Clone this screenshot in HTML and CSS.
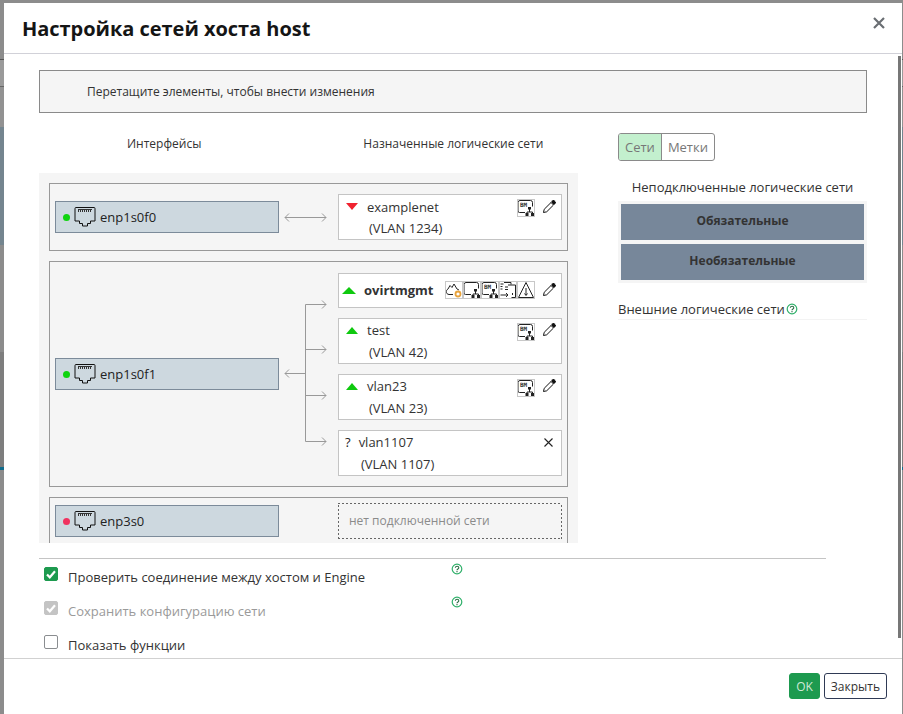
FILE: index.html
```html
<!DOCTYPE html>
<html lang="ru">
<head>
<meta charset="UTF-8">
<meta name="viewport" content="width=device-width, initial-scale=1.0">
<title>Настройка сетей хоста host</title>
<link rel="stylesheet" href="styles.css">
</head>
<body>
<svg class="defs" width="0" height="0">
    <symbol id="i-port" viewBox="0 0 22 20">
        <path d="M2 .5h18a1 1 0 0 1 1 1v12.500h-4.500v2.500h-3v2.500h-5v-2.500h-3v-2.500h-4.500v-12.500a1 1 0 0 1 1-1z" fill="none" stroke="#111"/>
        <path d="M4 2.500h14M4.500 3v2M6.500 3v2M8.500 3v2M10.500 3v2M12.500 3v2M14.500 3v2M16.500 3v2" fill="none" stroke="#333"/>
    </symbol>
    <symbol id="i-pencil" viewBox="0 0 14 14">
        <path d="M1.500 12.500l.7-3.200 6.800-6.800 2.500 2.500-6.800 6.800z" fill="#fff" stroke="#111"/>
        <path d="M9 2l1.700-1.700a1 1 0 0 1 1.400 0l1.600 1.600a1 1 0 0 1 0 1.400l-1.700 1.700z" fill="#111"/>
    </symbol>
    <symbol id="i-help" viewBox="0 0 12 12">
        <circle cx="6" cy="6" r="4.800" fill="#fff" stroke="#2fb06a" stroke-width="1.200"/>
        <path d="M4.300 4.700c.2-2 3.500-2 3.500 0 0 1.300-1.800 1.200-1.800 2.500" fill="none" stroke="#2c6e46" stroke-width="1.100"/>
        <path d="M6 8v1.200" stroke="#2c6e46" stroke-width="1.100"/>
    </symbol>
    <symbol id="i-x" viewBox="0 0 12 12">
        <path d="M1 1l10 10M11 1l-10 10" fill="none" stroke="currentColor" stroke-width="2.200"/>
    </symbol>
    <symbol id="i-x-thin" viewBox="0 0 9 9">
        <path d="M.5 .5l8 8M8.500 .5l-8 8" fill="none" stroke="currentColor" stroke-width="1.100"/>
    </symbol>
    <symbol id="i-tick" viewBox="0 0 12 12">
        <path d="M2 6.500l2.800 2.800 5.200-6" fill="none" stroke="#fff" stroke-width="2.200"/>
    </symbol>
    <symbol id="i-tree" viewBox="0 0 18 18">
        <path d="M5 13.500h-2.500a1.500 1.500 0 0 1-1.500-1.500v-8.500a2 2 0 0 1 2-2h10.500a2 2 0 0 1 2 2v4" fill="none" stroke="#222"/>
        <path d="M5 13.500h3M12.500 10v3M10 14v-1h5.500v1" fill="none" stroke="#222"/>
        <path d="M11 8h3v2.500h-3zM8.500 14h3v3h-3zM14 14h3v3h-3z" fill="#222"/>
    </symbol>
    <symbol id="i-mgmt" viewBox="0 0 18 18">
        <path d="M4 13.500c-3.500-.5-3.500-4-1-5.500l2-3.500 2 2 2-3.500 3 5 2 1" fill="none" stroke="#222"/>
        <path d="M4 13.500h4" stroke="#222"/>
        <circle cx="13" cy="13" r="2.500" fill="none" stroke="#e8a33d" stroke-width="1.800"/>
    </symbol>
    <symbol id="i-migrate" viewBox="0 0 18 18">
        <path d="M5 1.500h7v2M9 4h7.500v12.500h-4" fill="none" stroke="#222"/>
        <path d="M1.500 3h3M1.500 5.500h2M1.500 8h2M6 6h3M6 8.500h3M1.500 14h7M7 12l2 2-2 2M13.500 14v-2" fill="none" stroke="#222"/>
    </symbol>
    <symbol id="i-warn" viewBox="0 0 18 18">
        <path d="M9 1.500l7.500 15h-15z" fill="none" stroke="#222"/>
        <path d="M9 7v7M7.500 12.500l1.500 2 1.500-2" fill="none" stroke="#222"/>
    </symbol>
</svg>

<div class="modal">
    <div class="modal-header">
        <h1>Настройка сетей хоста host</h1>
        <svg class="close-x"><use href="#i-x"/></svg>
    </div>

    <div class="modal-body">
        <div class="scrollbar"></div>
        <div class="hint">Перетащите элементы, чтобы внести изменения</div>

        <div class="columns">
            <div class="left-col">
                <div class="col-titles">
                    <span class="title-ifaces">Интерфейсы</span>
                    <span class="title-nets">Назначенные логические сети</span>
                </div>
                <div class="panel">
                    <div class="group group-one">
                        <div class="iface">
                            <span class="dot up"></span>
                            <svg class="port"><use href="#i-port"/></svg>
                            enp1s0f0
                        </div>
                        <svg class="wire" width="59" height="12" viewBox="0 0 59 12">
                            <path d="M6 6.500h41M10 2.500l-4 4 4 4M43 2.500l4 4-4 4" fill="none" stroke="#999"/>
                        </svg>
                        <div class="nets">
                            <div class="net">
                                <div class="net-top">
                                    <span class="tri down"></span>
                                    <span class="net-name">examplenet</span>
                                    <span class="net-icons">
                                        <svg class="cap" viewBox="0 0 18 18"><use href="#i-tree"/><text class="icon-text" x="3" y="7.500">BM</text></svg>
                                    </span>
                                    <svg class="pencil"><use href="#i-pencil"/></svg>
                                </div>
                                <div class="vlan">(VLAN 1234)</div>
                            </div>
                        </div>
                    </div>

                    <div class="group">
                        <div class="iface">
                            <span class="dot up"></span>
                            <svg class="port"><use href="#i-port"/></svg>
                            enp1s0f1
                        </div>
                        <svg class="wire" width="59" height="204" viewBox="0 0 59 204">
                            <path d="M6 101.500h20.500M10 97.500l-4 4 4 4" fill="none" stroke="#999"/>
                            <path d="M26.500 32.500v137M26.500 32.500h20.500M26.500 77.500h20.500M26.500 123.500h20.500M26.500 169.500h20.500" fill="none" stroke="#999"/>
                            <path d="M43 28.500l4 4-4 4M43 73.500l4 4-4 4M43 119.500l4 4-4 4M43 165.500l4 4-4 4" fill="none" stroke="#999"/>
                        </svg>
                        <div class="nets">
                            <div class="net net-main">
                                <div class="net-top">
                                    <span class="tri up"></span>
                                    <span class="net-name bold">ovirtmgmt</span>
                                    <span class="net-icons">
                                        <svg class="cap" viewBox="0 0 18 18"><use href="#i-mgmt"/></svg>
                                        <svg class="cap" viewBox="0 0 18 18"><use href="#i-tree"/></svg>
                                        <svg class="cap" viewBox="0 0 18 18"><use href="#i-tree"/><text class="icon-text" x="3" y="7.500">BM</text></svg>
                                        <svg class="cap" viewBox="0 0 18 18"><use href="#i-migrate"/></svg>
                                        <svg class="cap" viewBox="0 0 18 18"><use href="#i-warn"/></svg>
                                    </span>
                                    <svg class="pencil"><use href="#i-pencil"/></svg>
                                </div>
                            </div>
                            <div class="net">
                                <div class="net-top">
                                    <span class="tri up"></span>
                                    <span class="net-name">test</span>
                                    <span class="net-icons">
                                        <svg class="cap" viewBox="0 0 18 18"><use href="#i-tree"/><text class="icon-text" x="3" y="7.500">BM</text></svg>
                                    </span>
                                    <svg class="pencil"><use href="#i-pencil"/></svg>
                                </div>
                                <div class="vlan">(VLAN 42)</div>
                            </div>
                            <div class="net">
                                <div class="net-top">
                                    <span class="tri up"></span>
                                    <span class="net-name">vlan23</span>
                                    <span class="net-icons">
                                        <svg class="cap" viewBox="0 0 18 18"><use href="#i-tree"/><text class="icon-text" x="3" y="7.500">BM</text></svg>
                                    </span>
                                    <svg class="pencil"><use href="#i-pencil"/></svg>
                                </div>
                                <div class="vlan">(VLAN 23)</div>
                            </div>
                            <div class="net net-unknown">
                                <div class="net-top">
                                    <span class="question">?</span>
                                    <span class="net-name">vlan1107</span>
                                    <span class="net-icons"></span>
                                    <svg class="remove"><use href="#i-x-thin"/></svg>
                                </div>
                                <div class="vlan">(VLAN 1107)</div>
                            </div>
                        </div>
                    </div>

                    <div class="group group-last">
                        <div class="iface">
                            <span class="dot down"></span>
                            <svg class="port"><use href="#i-port"/></svg>
                            enp3s0
                        </div>
                        <div class="no-net">нет подключенной сети</div>
                    </div>
                </div>
            </div>

            <div class="right-col">
                <div class="toggle">
                    <span class="toggle-item on">Сети</span>
                    <span class="toggle-item">Метки</span>
                </div>
                <div class="free-title">Неподключенные логические сети</div>
                <div class="free-panel">
                    <div class="free-box">Обязательные</div>
                    <div class="free-box">Необязательные</div>
                </div>
                <div class="external">Внешние логические сети<svg class="help"><use href="#i-help"/></svg></div>
            </div>
        </div>

        <div class="checks">
            <div class="check-row">
                <span class="box checked"><svg class="tick"><use href="#i-tick"/></svg></span>
                <span class="check-label">Проверить соединение между хостом и Engine</span>
                <svg class="help check-help"><use href="#i-help"/></svg>
            </div>
            <div class="check-row disabled">
                <span class="box checked"><svg class="tick"><use href="#i-tick"/></svg></span>
                <span class="check-label">Сохранить конфигурацию сети</span>
                <svg class="help check-help"><use href="#i-help"/></svg>
            </div>
            <div class="check-row">
                <span class="box"></span>
                <span class="check-label">Показать функции</span>
            </div>
        </div>
    </div>

    <div class="modal-footer">
        <button class="btn btn-ok">OK</button>
        <button class="btn">Закрыть</button>
    </div>
</div>
</body>
</html>
```

FILE: styles.css
```css
* {
    box-sizing: border-box;
}

html, body {
    height: 100%;
}

/* the dimmed page behind the dialog only shows as thin strips at the edges */
body {
    margin: 0;
    padding: 3px 1px 0 4px;
    overflow: hidden;
    font-family: "Open Sans", sans-serif;
    font-size: 13px;
    color: #333;
    background-color: #8a8a8a;
    background-image: linear-gradient(180deg,
        #8c8c8c 0 59px, #555 59px 60px,
        #9a9a9a 60px 86px, #666 86px 87px,
        #929292 87px 127px,
        #74858f 127px 245px,
        #8c8c8c 245px 352px,
        #7e7e7e 352px 467px, #0f6b8c 467px 470px,
        #8c8c8c 470px);
}

.defs {
    display: block;
    height: 0;
}

.icon-text {
    font-family: "DejaVu Sans Mono", monospace;
    font-size: 6px;
    font-weight: bold;
    fill: #333;
}

.modal {
    height: 711px;
    display: flex;
    flex-direction: column;
    background-color: #fff;
}

.modal-header {
    height: 51px;
    flex: none;
    display: flex;
    justify-content: space-between;
    padding: 11px 17px 0 18px;
    border-bottom: 1px solid #d1d1d8;
}

.modal-header h1 {
    margin: 0;
    font-size: 20px;
    line-height: 30px;
    font-weight: 700;
    letter-spacing: -0.03px;
    color: #151515;
}

.close-x {
    width: 12px;
    height: 12px;
    margin-top: 3px;
    color: #6a6e73;
}

.modal-body {
    position: relative;
    height: 604px;
    flex: none;
    padding: 16px 35px 0 35px;
    overflow: hidden;
}

.scrollbar {
    position: absolute;
    top: 2px;
    right: 1px;
    width: 3px;
    height: 582px;
    background-color: #777;
}

.hint {
    height: 43px;
    padding-left: 47px;
    font-size: 12px;
    line-height: 41px;
    background-color: #f5f5f5;
    border: 1px solid #8a8a8a;
}

.columns {
    display: flex;
    gap: 40px;
    height: 445px;
}

.left-col {
    width: 539px;
    flex: none;
}

.col-titles {
    height: 60px;
    display: flex;
    padding-top: 22px;
    font-size: 12px;
    line-height: 18px;
}

.title-ifaces {
    margin-left: 88px;
}

.title-nets {
    margin-left: 162px;
}

.panel {
    height: 370px;
    overflow: hidden;
    padding: 10px 10px 0;
    background-color: #f5f5f5;
}

.group {
    display: flex;
    align-items: center;
    padding: 0 5px;
    height: 226px;
    margin-bottom: 10px;
    border: 1px solid #999;
}

.group-one {
    height: 68px;
}

.group-last {
    height: 70px;
    align-items: flex-start;
    padding-top: 7px;
}

.iface {
    width: 224px;
    height: 32px;
    flex: none;
    display: flex;
    align-items: center;
    padding-left: 7px;
    color: #222;
    background-color: #cdd8df;
    border: 1px solid #7c8b9a;
}

.dot {
    width: 7px;
    height: 7px;
    margin-right: 4px;
    border-radius: 50%;
}

.dot.up {
    background-color: #0fd40f;
}

.dot.down {
    background-color: #f0325f;
}

.port {
    width: 22px;
    height: 20px;
    margin-right: 4px;
}

.wire {
    flex: none;
}

.nets {
    width: 224px;
    display: flex;
    flex-direction: column;
    gap: 10px;
}

.net {
    height: 46px;
    padding: 0 5px 0 7px;
    background-color: #fff;
    border: 1px solid #c4c4c4;
}

.net-main {
    height: 35px;
    padding-left: 3px;
}

.net-main .net-top {
    height: 33px;
}

.net-top {
    height: 23px;
    display: flex;
    align-items: center;
}

.net-name {
    margin-left: 9px;
}

.net-name.bold {
    margin-left: 8px;
    font-weight: 700;
}

.tri {
    width: 0;
    height: 0;
    border-left: 6.500px solid transparent;
    border-right: 6.500px solid transparent;
}

.net-main .tri {
    border-left-width: 7px;
    border-right-width: 7px;
}

.tri.up {
    border-bottom: 7px solid #0fc90f;
}

.tri.down {
    border-top: 7px solid #f0222f;
}

.net-icons {
    margin-left: auto;
    margin-top: 3px;
    display: flex;
}

.net-main .net-icons {
    margin-top: 0;
}

.cap {
    width: 18px;
    height: 18px;
    background-color: #fff;
    outline: 1px solid #c8c8c8;
    outline-offset: -1px;
}

.pencil {
    width: 14px;
    height: 14px;
    margin-left: 7px;
}

.vlan {
    padding-left: 23px;
    line-height: 20px;
}

.net-unknown .vlan {
    padding-left: 16px;
}

.question {
    color: #222;
}

.net-unknown {
    padding-left: 6px;
}

.net-unknown .net-name {
    margin-left: 8px;
}

.remove {
    width: 9px;
    height: 9px;
    margin-right: 3px;
    color: #222;
}

.no-net {
    width: 224px;
    height: 36px;
    margin-left: 59px;
    margin-top: -2px;
    padding-left: 11px;
    font-size: 12px;
    line-height: 36px;
    color: #8b8b8b;
    background-image:
        repeating-linear-gradient(90deg, #666 0 2px, transparent 2px 4px),
        repeating-linear-gradient(90deg, #666 0 2px, transparent 2px 4px),
        repeating-linear-gradient(0deg, #666 0 2px, transparent 2px 4px),
        repeating-linear-gradient(0deg, #666 0 2px, transparent 2px 4px);
    background-size: 100% 1px, 100% 1px, 1px 100%, 1px 100%;
    background-position: 0 0, 0 100%, 0 0, 100% 0;
    background-repeat: no-repeat;
}

.right-col {
    width: 249px;
    flex: none;
    padding-top: 20px;
}

.toggle {
    display: inline-flex;
    height: 28px;
    border: 1px solid #8a8a8a;
    border-radius: 3px;
    overflow: hidden;
}

.toggle-item {
    padding: 0 6px;
    line-height: 26px;
    color: #777;
}

.toggle-item.on {
    background-color: #c3f0ce;
    border-right: 1px solid #8a8a8a;
}

.free-title {
    margin-top: 17px;
    line-height: 18px;
    text-align: center;
}

.free-panel {
    margin-top: 5px;
    padding: 3px;
    display: flex;
    flex-direction: column;
    gap: 4px;
    background-color: #f5f5f5;
}

.free-box {
    height: 36px;
    font-size: 12px;
    line-height: 33px;
    text-align: center;
    font-weight: 700;
    background-color: #77879a;
}

.external {
    margin-top: 16px;
    height: 21px;
    display: flex;
    align-items: center;
    gap: 1px;
    border-bottom: 1px solid #f3f3f3;
}

.help {
    width: 12px;
    height: 12px;
}

.checks {
    width: 787px;
    padding-top: 1px;
    border-top: 1px solid #c4c4c4;
    height: 100px;
}

.check-row {
    height: 34px;
    display: flex;
    align-items: center;
    padding-left: 5px;
    position: relative;
}

.box {
    width: 14px;
    height: 14px;
    margin-top: -6px;
    margin-right: 10px;
    display: flex;
    align-items: center;
    justify-content: center;
    border: 1px solid #8a8d90;
    border-radius: 2px;
    background-color: #fff;
}

.box.checked {
    background-color: #1d9a4f;
    border-color: #1d9a4f;
}

.tick {
    width: 12px;
    height: 12px;
    flex: none;
}

.disabled .box.checked {
    background-color: #c4c4c4;
    border-color: #c4c4c4;
}

.disabled .check-label {
    color: #9a9a9a;
}

.check-help {
    position: absolute;
    left: 412px;
    top: 3px;
}

.disabled .check-help {
    top: 2px;
}

.modal-footer {
    flex: 1;
    display: flex;
    justify-content: flex-end;
    gap: 4px;
    padding: 14px 15px 0 0;
    border-top: 1px solid #d1d1d1;
}

.btn {
    height: 26px;
    padding: 0 6px;
    font-family: "Open Sans", sans-serif;
    font-size: 12px;
    color: #333;
    background-color: #fff;
    border: 1px solid #2f3a55;
    border-radius: 3px;
}

.btn-ok {
    color: #cfe9d6;
    background-color: #1d9a4f;
    border-color: #1d9a4f;
}
```
